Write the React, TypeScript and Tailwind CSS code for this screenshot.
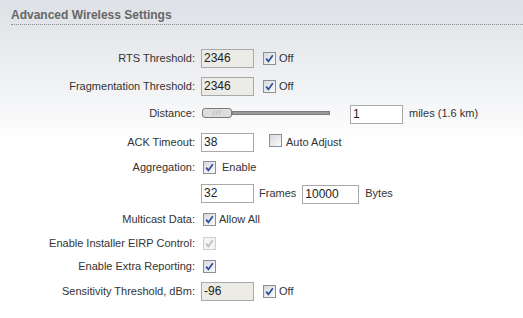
import React from 'react';

const font = { fontFamily: '"Liberation Sans", Arial, sans-serif' };

function Check({ checked = true, disabled = false }: { checked?: boolean; disabled?: boolean }) {
  return (
    <span
      className={`inline-flex w-[13px] h-[13px] shrink-0 items-center justify-center border ${
        disabled ? 'border-[#cfcfcf] bg-[#f4f4f4]' : 'border-[#8a8f99] bg-linear-to-br from-[#d8d9dc] to-[#fbfbfb]'
      }`}
    >
      {checked && (
        <svg width="9" height="9" viewBox="0 0 9 9">
          <path
            d="M1.2 4.6 L3.4 7.4 L7.8 1.2"
            fill="none"
            stroke={disabled ? '#bcbcbc' : '#2b4b9f'}
            strokeWidth="1.7"
          />
        </svg>
      )}
    </span>
  );
}

function Field({ value, disabled = false, w = 'w-[53px]' }: { value: string; disabled?: boolean; w?: string }) {
  return (
    <span
      className={`inline-flex items-center h-[19px] ${w} border border-[#a9a9a9] pl-[2px] text-[12px] text-[#222] ${
        disabled ? 'bg-[#ecebe5]' : 'bg-white'
      }`}
    >
      {value}
    </span>
  );
}

function Row({ label, h, children }: { label?: string; h: string; children: React.ReactNode }) {
  return (
    <div className={`flex items-center ${h}`}>
      <div className="w-[195px] shrink-0 text-right text-[11px] text-[#333] pr-0">{label}</div>
      <div className="flex items-center pl-[6px]">{children}</div>
    </div>
  );
}

export default function App() {
  return (
    <div className="w-[523px] h-[318px] overflow-hidden bg-linear-to-b from-[#dde0e5] via-[#f3f4f6] via-30% to-white to-45%" style={font}>
      <div className="pl-[11px] pt-[7px]">
        <div className="text-[12px] font-bold text-[#666] leading-[16px] pb-[1px] border-b border-dotted border-[#8a8a8a]">
          Advanced Wireless Settings
        </div>
      </div>

      <div className="pt-[19px]">
        <Row label="RTS Threshold:" h="h-[28px]">
          <Field value="2346" disabled />
          <span className="ml-[9px]"><Check /></span>
          <span className="ml-[3px] text-[11px] text-[#333]">Off</span>
        </Row>
        <Row label="Fragmentation Threshold:" h="h-[28px]">
          <Field value="2346" disabled />
          <span className="ml-[9px]"><Check /></span>
          <span className="ml-[3px] text-[11px] text-[#333]">Off</span>
        </Row>
        <Row label="Distance:" h="h-[26px]">
          <div className="flex items-center w-[128px] ml-[1px]">
            <span className="flex items-center justify-center w-[30px] h-[10px] rounded-[3px] border border-[#7a7a7a] bg-[#dedede] text-[7px] text-[#999] italic tracking-[1px]">
              ///
            </span>
            <span className="flex-1 h-[4px] bg-[#9a9a9a] border border-[#7c7c7c]" />
          </div>
          <span className="ml-[20px]"><Field value="1" /></span>
          <span className="ml-[6px] text-[11px] text-[#333]">miles (1.6 km)</span>
        </Row>
        <Row label="ACK Timeout:" h="h-[32px]">
          <Field value="38" />
          <span className="ml-[15px]"><Check checked={false} /></span>
          <span className="ml-[4px] text-[11px] text-[#333]">Auto Adjust</span>
        </Row>
        <Row label="Aggregation:" h="h-[18px]">
          <span className="ml-[2px]"><Check /></span>
          <span className="ml-[6px] text-[11px] text-[#333]">Enable</span>
        </Row>
        <Row h="h-[34px]">
          <Field value="32" />
          <span className="ml-[5px] text-[11px] text-[#333]">Frames</span>
          <span className="ml-[6px]"><Field value="10000" w="w-[57px]" /></span>
          <span className="ml-[6px] text-[11px] text-[#333]">Bytes</span>
        </Row>
        <Row label="Multicast Data:" h="h-[18px]">
          <span className="ml-[2px]"><Check /></span>
          <span className="ml-[3px] text-[11px] text-[#333]">Allow All</span>
        </Row>
        <Row label="Enable Installer EIRP Control:" h="h-[30px]">
          <span className="ml-[2px]"><Check disabled /></span>
        </Row>
        <Row label="Enable Extra Reporting:" h="h-[16px]">
          <span className="ml-[2px]"><Check /></span>
        </Row>
        <Row label="Sensitivity Threshold, dBm:" h="h-[34px]">
          <Field value="-96" disabled />
          <span className="ml-[9px]"><Check /></span>
          <span className="ml-[3px] text-[11px] text-[#333]">Off</span>
        </Row>
      </div>
    </div>
  );
}
